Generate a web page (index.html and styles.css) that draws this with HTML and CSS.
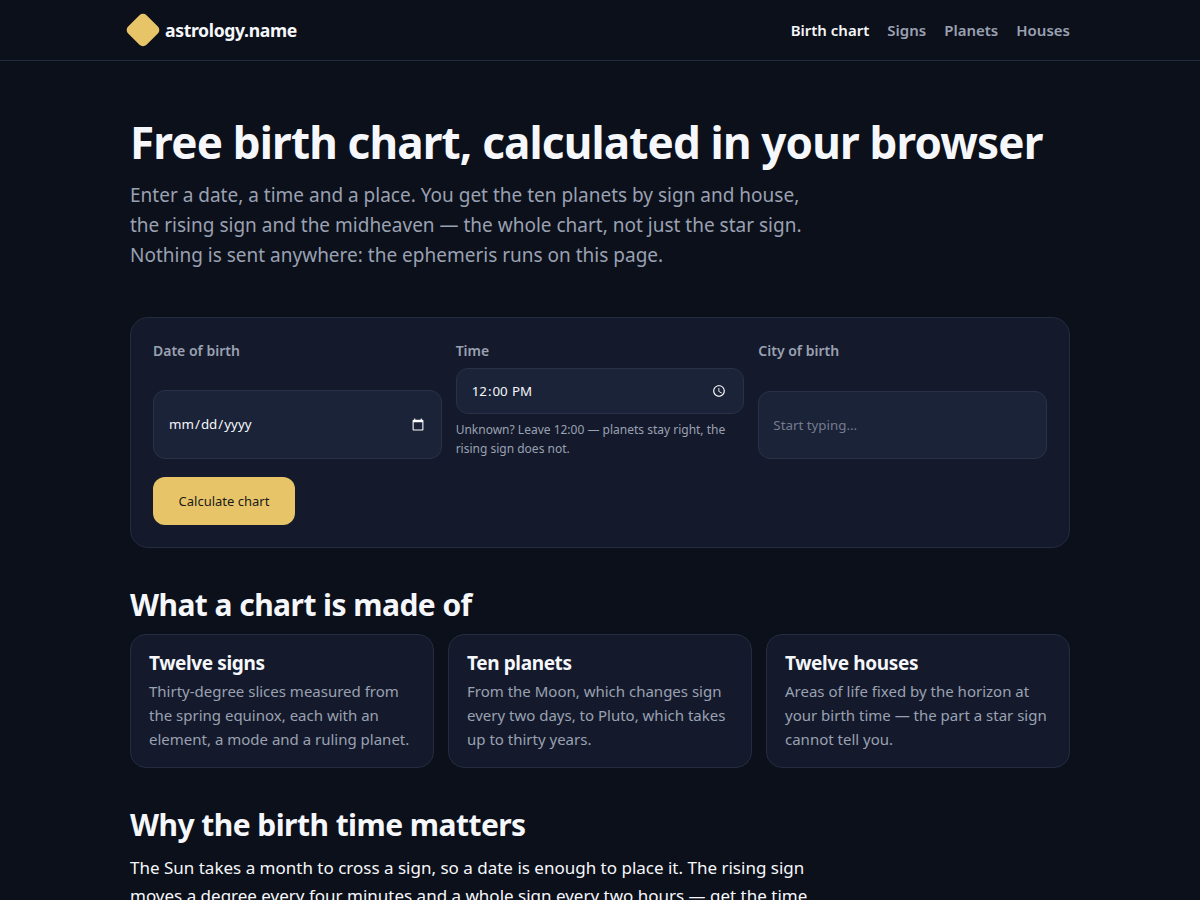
FILE: index.html
```html
<!DOCTYPE html>
<html lang="en">
<head>
    <meta charset="UTF-8">
    <meta name="viewport" content="width=device-width, initial-scale=1.0">
    <title>Free birth chart, calculated in your browser</title>
    <link rel="stylesheet" href="styles.css">
</head>
<body>
    <header class="site-header">
        <div class="header-inner">
            <a class="brand" href="#"><span class="brand-mark"></span>astrology.name</a>
            <nav class="main-nav">
                <a class="active" href="#">Birth chart</a>
                <a href="#">Signs</a>
                <a href="#">Planets</a>
                <a href="#">Houses</a>
            </nav>
        </div>
    </header>

    <main class="page">
        <h1>Free birth chart, calculated in your browser</h1>
        <p class="lead">Enter a date, a time and a place. You get the ten planets by sign and house, the rising sign and the midheaven — the whole chart, not just the star sign. Nothing is sent anywhere: the ephemeris runs on this page.</p>

        <form class="chart-form">
            <div class="form-grid">
                <div class="field field-date">
                    <label for="birthDate">Date of birth</label>
                    <input id="birthDate" type="date">
                </div>
                <div class="field">
                    <label for="birthTime">Time</label>
                    <input id="birthTime" type="time" value="12:00">
                    <p class="hint">Unknown? Leave 12:00 — planets stay right, the rising sign does not.</p>
                </div>
                <div class="field field-city">
                    <label for="birthCity">City of birth</label>
                    <input id="birthCity" type="text" placeholder="Start typing...">
                </div>
            </div>
            <button class="submit-button" type="button">Calculate chart</button>
        </form>

        <h2>What a chart is made of</h2>
        <div class="cards">
            <div class="card">
                <h3>Twelve signs</h3>
                <p>Thirty-degree slices measured from the spring equinox, each with an element, a mode and a ruling planet.</p>
            </div>
            <div class="card">
                <h3>Ten planets</h3>
                <p>From the Moon, which changes sign every two days, to Pluto, which takes up to thirty years.</p>
            </div>
            <div class="card">
                <h3>Twelve houses</h3>
                <p>Areas of life fixed by the horizon at your birth time — the part a star sign cannot tell you.</p>
            </div>
        </div>

        <h2 class="section-gap">Why the birth time matters</h2>
        <p class="body-text">The Sun takes a month to cross a sign, so a date is enough to place it. The rising sign moves a degree every four minutes and a whole sign every two hours — get the time wrong and the houses move with it.</p>
    </main>
</body>
</html>
```

FILE: styles.css
```css
* {
    box-sizing: border-box;
}

html {
    color-scheme: dark;
}

body {
    margin: 0;
    background-color: #0c101a;
    color: #f5f7fb;
    font-family: "Noto Sans", sans-serif;
    font-size: 16px;
    line-height: 1.5;
}

a {
    text-decoration: none;
    color: inherit;
}

.site-header {
    height: 61px;
    border-bottom: 1px solid #232c40;
}

.header-inner {
    width: 940px;
    height: 60px;
    margin: 0 auto;
    display: flex;
    align-items: center;
    justify-content: space-between;
}

.brand {
    display: flex;
    align-items: center;
    gap: 9px;
    font-size: 17.6px;
    font-weight: 700;
    letter-spacing: -0.02em;
}

.brand-mark {
    width: 26px;
    height: 26px;
    border-radius: 5px;
    background-color: #e8c468;
    transform: rotate(45deg);
}

.main-nav {
    display: flex;
    gap: 18px;
    font-size: 15px;
    font-weight: 600;
    color: #9aa1b2;
}

.main-nav .active {
    color: #f5f7fb;
}

.page {
    width: 940px;
    margin: 0 auto;
    padding-top: 55px;
}

h1 {
    margin: 0;
    font-size: 44px;
    line-height: 1.2;
    font-weight: 700;
    letter-spacing: -0.83px;
}

.lead {
    margin: 11px 0 0;
    max-width: 680px;
    font-size: 19px;
    line-height: 30px;
    color: #9aa1b2;
}

.chart-form {
    margin-top: 47px;
    padding: 22px;
    background-color: #141a2b;
    border: 1px solid #232c40;
    border-radius: 18px;
}

.form-grid {
    display: grid;
    grid-template-columns: repeat(3, 1fr);
    gap: 14px;
}

.field {
    display: flex;
    flex-direction: column;
}

.field label {
    font-size: 14px;
    font-weight: 600;
    line-height: 21px;
    color: #9aa1b2;
    margin-bottom: 7px;
}

.field input {
    width: 100%;
    height: 46px;
    padding: 0 14px;
    background-color: #1b2338;
    border: 1px solid #283148;
    border-radius: 12px;
    color: #f5f7fb;
    font-family: inherit;
    font-size: 13.33px;
}

.field-date input,
.field-city input {
    flex: 1;
    height: auto;
}

.field-date input {
    margin-top: 22px;
}

.field-city input {
    margin-top: 23px;
}

.field input::placeholder {
    color: #757b8c;
}

.hint {
    margin: 6px 0 1px;
    font-size: 12px;
    line-height: 19px;
    color: #9aa1b2;
}

.submit-button {
    display: block;
    margin-top: 18px;
    width: 142px;
    height: 48px;
    border: none;
    border-radius: 12px;
    background-color: #e8c468;
    color: #1a1a1a;
    font-family: inherit;
    font-size: 13px;
}

h2 {
    margin: 36px 0 8px;
    font-size: 30px;
    line-height: 1.4;
    font-weight: 700;
    letter-spacing: -0.55px;
}

.cards {
    display: grid;
    grid-template-columns: repeat(3, 1fr);
    gap: 14px;
}

.card {
    padding: 14px 18px 16px;
    background-color: #141a2b;
    border: 1px solid #232c40;
    border-radius: 16px;
}

.card h3 {
    margin: 0 0 2px;
    font-size: 19px;
    line-height: 28px;
    font-weight: 700;
    letter-spacing: -0.02em;
}

.card p {
    margin: 0;
    font-size: 15px;
    line-height: 24px;
    color: #9aa1b2;
}

.section-gap {
    margin-top: 36px;
}

.body-text {
    margin: 0;
    max-width: 680px;
    font-size: 17px;
    line-height: 28px;
}
```
